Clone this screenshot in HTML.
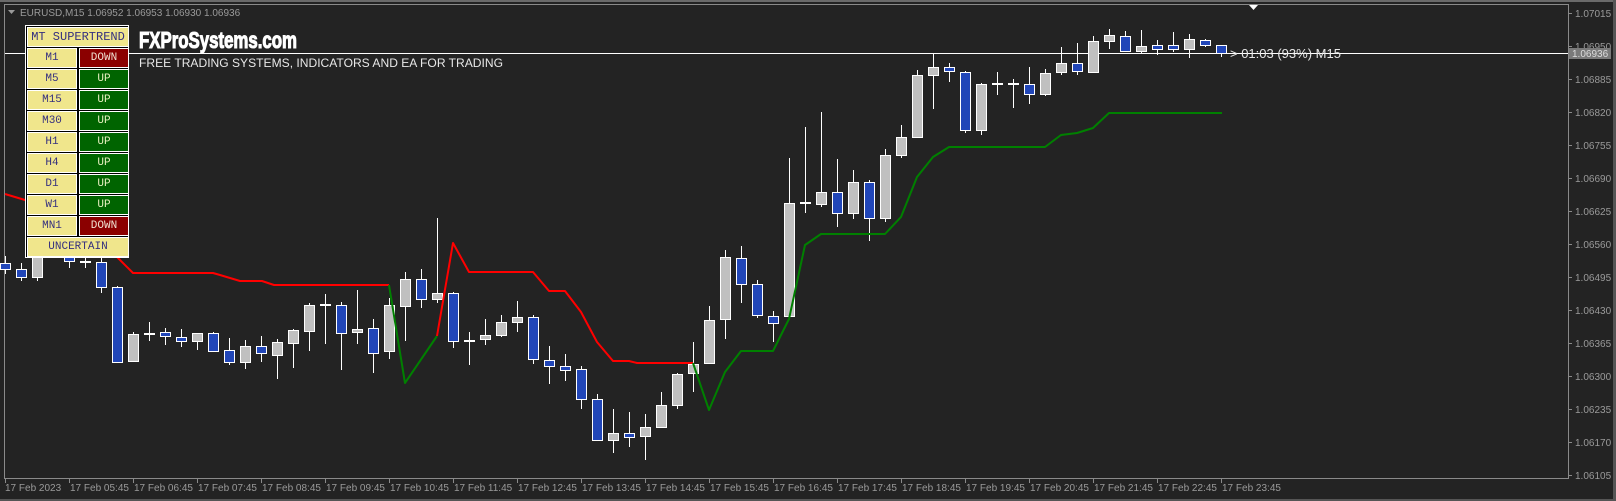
<!DOCTYPE html>
<html><head><meta charset="utf-8"><style>
html,body{margin:0;padding:0;background:#232323;width:1616px;height:501px;overflow:hidden}
svg{position:absolute;left:0;top:0}
.panel{position:absolute;left:25px;top:25px;width:104px;height:233px;background:#000;border:1px solid #fff;box-sizing:border-box}
.c{position:absolute;background:#f0e68c;border:1px solid #fff;box-sizing:border-box;font:11px "Liberation Mono",monospace;color:#35307f;text-align:center}
.r{color:#f0e0d0}
</style></head><body>
<svg width="1616" height="501" xmlns="http://www.w3.org/2000/svg">
<rect width="1616" height="501" fill="#232323"/>
<rect x="0" y="0" width="1616" height="2" fill="#6a6a6a"/>
<rect x="1613" y="0" width="3" height="501" fill="#555"/>
<rect x="0" y="499" width="1616" height="2" fill="#555"/>
<path d="M4.5 4.5H1568.5V478.5H4.5Z" fill="none" stroke="#8a8a8a"/>
<g stroke="#8a8a8a">
<path d="M1568 13.5h4M1568 46.5h4M1568 79.5h4M1568 112.5h4M1568 145.5h4M1568 178.5h4M1568 211.5h4M1568 244.5h4M1568 277.5h4M1568 310.5h4M1568 343.5h4M1568 376.5h4M1568 409.5h4M1568 442.5h4M1568 475.5h4"/>
<path d="M5.5 478v5M69.5 478v5M133.5 478v5M197.5 478v5M261.5 478v5M325.5 478v5M389.5 478v5M453.5 478v5M517.5 478v5M581.5 478v5M645.5 478v5M709.5 478v5M773.5 478v5M837.5 478v5M901.5 478v5M965.5 478v5M1029.5 478v5M1093.5 478v5M1157.5 478v5M1221.5 478v5"/>
</g>
<g font-family="Liberation Sans, sans-serif" font-size="10" fill="#9a9a9a">
<text x="1575" y="17">1.07015</text><text x="1575" y="50">1.06950</text><text x="1575" y="83">1.06885</text><text x="1575" y="116">1.06820</text><text x="1575" y="149">1.06755</text><text x="1575" y="182">1.06690</text><text x="1575" y="215">1.06625</text><text x="1575" y="248">1.06560</text><text x="1575" y="281">1.06495</text><text x="1575" y="314">1.06430</text><text x="1575" y="347">1.06365</text><text x="1575" y="380">1.06300</text><text x="1575" y="413">1.06235</text><text x="1575" y="446">1.06170</text><text x="1575" y="479">1.06105</text>
<text x="5" y="491">17 Feb 2023</text><text x="70" y="491">17 Feb 05:45</text><text x="134" y="491">17 Feb 06:45</text><text x="198" y="491">17 Feb 07:45</text><text x="262" y="491">17 Feb 08:45</text><text x="326" y="491">17 Feb 09:45</text><text x="390" y="491">17 Feb 10:45</text><text x="454" y="491">17 Feb 11:45</text><text x="518" y="491">17 Feb 12:45</text><text x="582" y="491">17 Feb 13:45</text><text x="646" y="491">17 Feb 14:45</text><text x="710" y="491">17 Feb 15:45</text><text x="774" y="491">17 Feb 16:45</text><text x="838" y="491">17 Feb 17:45</text><text x="902" y="491">17 Feb 18:45</text><text x="966" y="491">17 Feb 19:45</text><text x="1030" y="491">17 Feb 20:45</text><text x="1094" y="491">17 Feb 21:45</text><text x="1158" y="491">17 Feb 22:45</text><text x="1222" y="491">17 Feb 23:45</text>
<text x="20" y="16">EURUSD,M15  1.06952 1.06953 1.06930 1.06936</text>
</g>
<path d="M8 10h7l-3.5 4z" fill="#9a9a9a"/>
<path d="M1249 5h9l-4.5 5z" fill="#fff"/>
<path d="M5 53.5H1568" stroke="#fff"/>
<rect x="1569" y="48" width="42" height="11" fill="#7a7a7a"/>
<text x="1572" y="57" font-family="Liberation Sans, sans-serif" font-size="10" fill="#dcdcdc">1.06936</text>
<path stroke="#fff" fill="none" d="M5.5 256V274M21.5 263V281M37.5 245V281M53.5 235V258M69.5 245V268M85.5 255V268M101.5 258V293M117.5 286V362M133.5 332V361M149.5 322V341M165.5 328V345M181.5 329V347M197.5 333V350M213.5 332V352M229.5 338V365M245.5 340V369M261.5 336V362M277.5 339V379M293.5 329V368M309.5 303V351M325.5 294V344M341.5 302V370M357.5 290V344M373.5 319V373M389.5 298V359M405.5 272V341M421.5 269V308M437.5 218V303M453.5 292V348M469.5 332V365M485.5 319V345M501.5 315V337M517.5 301V332M533.5 315V364M549.5 346V384M565.5 354V381M581.5 366V409M597.5 394V440M613.5 409V453M629.5 412V447M645.5 414V460M661.5 392V427M677.5 373V409M693.5 342V392M709.5 306V363M725.5 250V339M741.5 246V303M757.5 280V318M773.5 311V342M789.5 158V316M805.5 127V213M821.5 112V207M837.5 159V227M853.5 170V219M869.5 180V241M885.5 149V222M901.5 125V158M917.5 70V138M933.5 53V109M949.5 63V82M965.5 71V133M981.5 83V135M997.5 72V95M1013.5 79V108M1029.5 67V104M1045.5 69V96M1061.5 47V75M1077.5 43V75M1093.5 36V72M1109.5 29V49M1125.5 31V52M1141.5 30V53M1157.5 40V55M1173.5 32V52M1189.5 34V58M1205.5 39V47M1221.5 45V57"/>
<path stroke="#fff" stroke-width="2" d="M80 262h11M144 334h11M320 305h11M464 341h11M800 203h11M992 84h11M1008 84h11"/>
<g fill="#c0c0c0" stroke="#fff">
<rect x="32.5" y="250.5" width="10" height="27"/><rect x="48.5" y="240.5" width="10" height="15"/><rect x="128.5" y="334.5" width="10" height="27"/><rect x="192.5" y="333.5" width="10" height="8"/><rect x="240.5" y="346.5" width="10" height="16"/><rect x="272.5" y="342.5" width="10" height="13"/><rect x="288.5" y="330.5" width="10" height="13"/><rect x="304.5" y="305.5" width="10" height="26"/><rect x="352.5" y="329.5" width="10" height="3"/><rect x="384.5" y="305.5" width="10" height="46"/><rect x="400.5" y="279.5" width="10" height="27"/><rect x="432.5" y="293.5" width="10" height="6"/><rect x="480.5" y="335.5" width="10" height="4"/><rect x="496.5" y="322.5" width="10" height="13"/><rect x="512.5" y="317.5" width="10" height="5"/><rect x="608.5" y="433.5" width="10" height="7"/><rect x="640.5" y="427.5" width="10" height="9"/><rect x="656.5" y="405.5" width="10" height="22"/><rect x="672.5" y="374.5" width="10" height="31"/><rect x="688.5" y="364.5" width="10" height="9"/><rect x="704.5" y="320.5" width="10" height="43"/><rect x="720.5" y="257.5" width="10" height="62"/><rect x="784.5" y="203.5" width="10" height="113"/><rect x="816.5" y="192.5" width="10" height="12"/><rect x="848.5" y="182.5" width="10" height="31"/><rect x="880.5" y="155.5" width="10" height="63"/><rect x="896.5" y="137.5" width="10" height="18"/><rect x="912.5" y="75.5" width="10" height="62"/><rect x="928.5" y="67.5" width="10" height="8"/><rect x="976.5" y="84.5" width="10" height="46"/><rect x="1040.5" y="73.5" width="10" height="21"/><rect x="1056.5" y="63.5" width="10" height="9"/><rect x="1088.5" y="41.5" width="10" height="31"/><rect x="1104.5" y="35.5" width="10" height="6"/><rect x="1136.5" y="46.5" width="10" height="5"/><rect x="1184.5" y="39.5" width="10" height="10"/>
</g>
<g fill="#2146b8" stroke="#fff">
<rect x="0.5" y="263.5" width="10" height="6"/><rect x="16.5" y="269.5" width="10" height="8"/><rect x="64.5" y="250.5" width="10" height="11"/><rect x="96.5" y="262.5" width="10" height="25"/><rect x="112.5" y="287.5" width="10" height="75"/><rect x="160.5" y="332.5" width="10" height="4"/><rect x="176.5" y="337.5" width="10" height="4"/><rect x="208.5" y="333.5" width="10" height="18"/><rect x="224.5" y="350.5" width="10" height="12"/><rect x="256.5" y="346.5" width="10" height="7"/><rect x="336.5" y="305.5" width="10" height="28"/><rect x="368.5" y="328.5" width="10" height="25"/><rect x="416.5" y="279.5" width="10" height="20"/><rect x="448.5" y="293.5" width="10" height="48"/><rect x="528.5" y="317.5" width="10" height="42"/><rect x="544.5" y="360.5" width="10" height="6"/><rect x="560.5" y="366.5" width="10" height="4"/><rect x="576.5" y="369.5" width="10" height="30"/><rect x="592.5" y="399.5" width="10" height="41"/><rect x="624.5" y="433.5" width="10" height="4"/><rect x="736.5" y="258.5" width="10" height="26"/><rect x="752.5" y="284.5" width="10" height="31"/><rect x="768.5" y="316.5" width="10" height="7"/><rect x="832.5" y="192.5" width="10" height="21"/><rect x="864.5" y="182.5" width="10" height="36"/><rect x="944.5" y="67.5" width="10" height="4"/><rect x="960.5" y="72.5" width="10" height="58"/><rect x="1024.5" y="84.5" width="10" height="10"/><rect x="1072.5" y="63.5" width="10" height="8"/><rect x="1120.5" y="36.5" width="10" height="15"/><rect x="1152.5" y="45.5" width="10" height="4"/><rect x="1168.5" y="45.5" width="10" height="4"/><rect x="1200.5" y="40.5" width="10" height="5"/><rect x="1216.5" y="45.5" width="10" height="8"/>
</g>
<g fill="none" stroke-width="2" stroke-linejoin="round">
<polyline stroke="#ff0000" points="5,194 25,200 115,255 133,273 213,273 220,275 240,281 262,281 274,285 389,285"/>
<polyline stroke="#008000" points="389,285 405,383 437,336"/>
<polyline stroke="#ff0000" points="437,336 453,243 469,272 533,272 549,291 565,291 581,312 597,342 613,361 629,361 637,363 693,363"/>
<polyline stroke="#008000" points="693,363 709,410 725,372 741,351 773,351 789,319 805,245 821,234 885,234 901,217 917,177 933,157 949,147 1045,147 1061,135 1077,133 1093,128 1109,113 1222,113"/>
</g>
<text x="1230" y="58" font-family="Liberation Sans, sans-serif" font-size="13" fill="#e8e8e8">&gt; 01:03 (93%) M15</text>
<text x="139" y="48" font-family="Liberation Sans, sans-serif" font-weight="bold" font-size="23" fill="#fff" stroke="#fff" stroke-width="1.1" textLength="158" lengthAdjust="spacingAndGlyphs">FXProSystems.com</text>
<text x="139" y="67" font-family="Liberation Sans, sans-serif" font-size="12" fill="#e8e8e8" textLength="364" lengthAdjust="spacingAndGlyphs">FREE TRADING SYSTEMS, INDICATORS AND EA FOR TRADING</text>
</svg>
<div class="panel"></div>
<div class="c" style="left:27px;top:27px;width:102px;height:20px;line-height:18px;font-size:12px">MT SUPERTREND</div>
<div class="c" style="left:27px;top:48px;width:50px;height:20px;line-height:18px">M1</div><div class="c r" style="left:79px;top:48px;width:50px;height:20px;line-height:18px;background:#8b0000">DOWN</div>
<div class="c" style="left:27px;top:69px;width:50px;height:20px;line-height:18px">M5</div><div class="c r" style="left:79px;top:69px;width:50px;height:20px;line-height:18px;background:#006400;color:#e8f0c0">UP</div>
<div class="c" style="left:27px;top:90px;width:50px;height:20px;line-height:18px">M15</div><div class="c r" style="left:79px;top:90px;width:50px;height:20px;line-height:18px;background:#006400;color:#e8f0c0">UP</div>
<div class="c" style="left:27px;top:111px;width:50px;height:20px;line-height:18px">M30</div><div class="c r" style="left:79px;top:111px;width:50px;height:20px;line-height:18px;background:#006400;color:#e8f0c0">UP</div>
<div class="c" style="left:27px;top:132px;width:50px;height:20px;line-height:18px">H1</div><div class="c r" style="left:79px;top:132px;width:50px;height:20px;line-height:18px;background:#006400;color:#e8f0c0">UP</div>
<div class="c" style="left:27px;top:153px;width:50px;height:20px;line-height:18px">H4</div><div class="c r" style="left:79px;top:153px;width:50px;height:20px;line-height:18px;background:#006400;color:#e8f0c0">UP</div>
<div class="c" style="left:27px;top:174px;width:50px;height:20px;line-height:18px">D1</div><div class="c r" style="left:79px;top:174px;width:50px;height:20px;line-height:18px;background:#006400;color:#e8f0c0">UP</div>
<div class="c" style="left:27px;top:195px;width:50px;height:20px;line-height:18px">W1</div><div class="c r" style="left:79px;top:195px;width:50px;height:20px;line-height:18px;background:#006400;color:#e8f0c0">UP</div>
<div class="c" style="left:27px;top:216px;width:50px;height:20px;line-height:18px">MN1</div><div class="c r" style="left:79px;top:216px;width:50px;height:20px;line-height:18px;background:#8b0000">DOWN</div>
<div class="c" style="left:27px;top:237px;width:102px;height:20px;line-height:18px">UNCERTAIN</div>
</body></html>
